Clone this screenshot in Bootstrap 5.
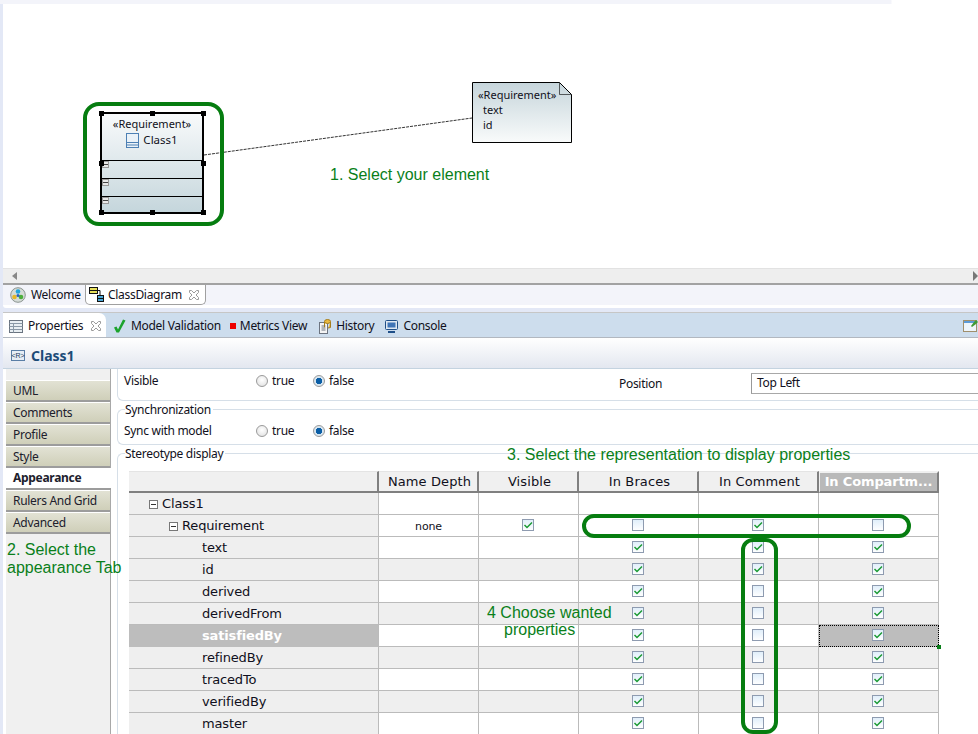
<!DOCTYPE html>
<html lang="en">
<head>
<meta charset="utf-8">
<title>Class diagram properties</title>
<link href="https://cdn.jsdelivr.net/npm/bootstrap@5.3.0/dist/css/bootstrap.min.css" rel="stylesheet">
<style>
html,body{height:734px;overflow:hidden}
body{background:#e3e8f6;font-family:"Noto Sans","Open Sans",sans-serif;font-size:12px;line-height:16px;letter-spacing:-.3px;color:#101020;position:relative;width:978px}
.topstrip{height:4px;background:linear-gradient(90deg,#f3f4fa 891px,#fff 892px)}
.workbench{margin-left:3px}
.canvasarea{height:264px;background:#fff;position:relative}
.hbar{height:17px;background:#eee;border-top:1px solid #e2e2e2;border-bottom:2px solid #a2a2a2;padding:0 0 0 9px}
.arrowl{width:0;height:0;border:4px solid transparent;border-right:5px solid #888;border-left:0}
.arrowr{width:0;height:0;border:5px solid transparent;border-left:5px solid #777;border-right:0}
.edtabs{height:20px;background:#f3f4fa;padding-left:5px}
.edtab{height:20px;gap:5px;padding:0 0 0 2px;width:77px}
.edtab.on{background:#fff;border:1px solid #a0a0a0;border-top:0;border-radius:0 0 5px 5px;width:121px;padding-left:3px;gap:4px}
.gapwhite{height:3px;background:#fff;border-radius:0 0 0 6px}
.gapblue{height:4px}
.viewtabs{height:26px;background:#cddded;border-top:1px solid #c6c6c6;border-bottom:1px solid #b2b8c0;position:relative}
.viewtab{gap:5px;height:24px;white-space:nowrap;padding-top:2px}
.viewtab.on{background:#fff;width:103px;border-radius:0 7px 0 0;padding-left:6px;margin-right:7px}
.viewtab.tight{gap:4px;margin-right:12px}
.vt-m{margin-right:9px}
.vt-h{margin-right:11px}
.xgap{margin-left:2px}
.pinbox{margin-left:auto}
.titlebar{height:31px;background:linear-gradient(#fff,#e3e7f0);border-bottom:1px solid #c4d3e0;padding:5px 0 0 8px;gap:6px;font-weight:700;font-size:14px;letter-spacing:0;color:#1c4b78}
.bodypane{height:365px;background:#fff;position:relative;overflow:hidden}
.sidetabs{width:105px;flex:none;margin-left:3px;background:#f0f0f0;border-right:1px solid #a8a8a8;padding-top:11px;margin-right:6px}
.sidetab{height:22px;padding:0 0 0 7px;line-height:20px;background:linear-gradient(#e2e2d4,#cfcfb9);border-top:1px solid #fff;border-bottom:2px solid #9c9c9c;color:#20202c}
.sidetab.on{background:#fff;font-weight:700;border-bottom:2px solid #9c9c9c;border-top:0;margin-right:-1px}
.panels{flex:1;min-width:0}
.grp{border:1px solid #d6dfe8;border-right:0;border-radius:6px 0 0 6px;position:relative}
.grp1{height:32px;border-top:0;border-radius:0 0 0 6px;margin-bottom:8px}
.grp2{height:36px;margin-bottom:8px}
.grp3{height:281px;border-bottom:0;border-radius:6px 0 0 0}
.legendtxt{position:absolute;left:7px;top:-8px;background:#fff;padding-right:2px;line-height:16px}
.proprow{height:20px;padding-left:6px}
.grp1 .proprow{padding-top:2px;height:22px}
.grp2 .proprow{position:absolute;top:11px;left:0;right:0;height:20px}
.propname{width:132px;flex:none}
.radiox{gap:4px;margin-right:17px;width:40px;flex:none}
.radiox + .radiox{width:50px}
.rad{width:12px;height:12px;border-radius:50%;border:1px solid #9a9a9a;background:radial-gradient(circle at 50% 40%,#fff,#ddd);display:inline-block;flex:none}
.rad.sel{background:radial-gradient(circle,#0a5ea6 0 3px,#d8e6f0 3.500px)}
.poslabel{margin-left:239px;width:132px;flex:none;padding-top:5px}
.posinput{flex:1;align-self:flex-start;height:21px;border:1px solid #a8a8a8;border-left:1px solid #999;border-right:0;padding-left:5px;margin-top:2px;line-height:17px}
.tablewrap{padding:17px 0 0 11px;height:280px;overflow:hidden}
.grid810{width:810px;table-layout:fixed;border-collapse:separate;border-spacing:0;font-family:"DejaVu Sans",sans-serif;font-size:13px;line-height:16px;letter-spacing:-.15px;margin:0;color:#101020}
.grid810 th{height:22px;padding:1px 0 0 3px;background:#f0f0f0;border-top:1px solid #e4e4e4;border-right:2px solid #808080;border-bottom:2px solid #808080;font-weight:400;letter-spacing:.1px;text-align:center;white-space:nowrap;overflow:hidden}
.grid810 th.hsel{padding:0;background:#b9b9b9;color:#fff;font-weight:700;letter-spacing:-.15px;border-top:2px solid #f0f0f0;border-left:1px solid #f0f0f0}
.grid810 td{height:22px;padding:0;border-right:1px solid #bbb;border-bottom:1px solid #bbb;background:#fff;text-align:center;vertical-align:middle}
.grid810 tr.alt td{background:#efefef}
.grid810 td.namecell{background:#efefef;text-align:left;border-right:1px solid #bbb;white-space:nowrap}
.grid810 td.lvl0{padding-left:20px}
.grid810 td.lvl1{padding-left:40px}
.grid810 td.lvl2{padding-left:73px}
.grid810 td.namesel{background:#bdbdbd;color:#fff;font-weight:700;border-bottom-color:#bdbdbd}
.grid810 td.cellsel{background:#bdbdbd;border:1px dotted #000;border-left:1px dotted #000;position:relative}
.grid810 td.none{font-size:11px;padding-top:2px}
.cornerdot{position:absolute;right:-3px;bottom:-3px;width:4px;height:4px;background:#0a7f1a}
.twist{display:inline-block;width:9px;height:9px;border:1px solid #777;position:relative;margin-right:4px;vertical-align:-1px;background:#fff}
.twist::after{content:"";position:absolute;left:1px;right:1px;top:3px;height:1px;background:#333}
.ckbx{display:block;width:12px;height:12px;margin:-2px 0 0 calc(50% - 7px)}
.ico{flex:none;display:block}
.umlclass{position:absolute;left:100px;top:112px;width:104px;height:102px;border:2px solid #000;background:linear-gradient(#f8fafb,#c5d6dc);text-align:center;line-height:16px;padding-top:2px;font-size:11px;letter-spacing:0}
.cls-name{gap:4px;font-size:11.500px}
.cpt{position:absolute;left:0;right:0;height:18px;border-top:1px solid #000}
.cpt-a{top:46px}
.cpt-b{top:64px}
.cpt-c{top:82px}
.cpt::before{content:"";position:absolute;left:0;top:0;width:7px;height:7px;border:1px solid #999;background:linear-gradient(#e8e8e8 2px,#444 2px,#444 3px,#e8e8e8 3px)}
.handle{position:absolute;width:5px;height:5px;background:#000}
.hx1{left:99px}.hx2{left:150px}.hx3{left:201px}
.hy1{top:111px}.hy2{top:161px}.hy3{top:210px}
.umlnote{position:absolute;left:472px;top:82px;width:86px;height:60px;padding:5px 0 0 6px;line-height:15px;font-size:11px;letter-spacing:0}
.notetxt{white-space:nowrap}
.noteattr{padding-left:5px}
.ovl{position:absolute;left:0;top:0;pointer-events:none}
.ann{position:absolute;font-family:"Liberation Sans",Arial,sans-serif;font-size:16px;line-height:18px;letter-spacing:0;color:#0a7f1a;white-space:nowrap}
.ann1{left:330px;top:166px}
.ann2{left:7px;top:541px}
.ann3{left:507px;top:446px}
.ann4{left:487px;top:604px}
.ann4b{padding-left:17px;margin-top:-1px}
.pill{position:absolute;border:4px solid #067d10;background:transparent}
.pill-sel{left:83px;top:102px;width:141px;height:124px;border-radius:16px}
.pill-row{left:582px;top:514px;width:329px;height:24px;border-radius:12px}
.pill-col{left:741px;top:538px;width:37px;height:196px;border-radius:12px}
</style>
</head>
<body>
<svg width="0" height="0" class="position-absolute">
<defs>
<linearGradient id="boxg" x1="0" y1="0" x2="0" y2="1"><stop offset="0" stop-color="#dfeefa"/><stop offset="1" stop-color="#fff"/></linearGradient>
<linearGradient id="noteg" x1="0" y1="0" x2="0" y2="1"><stop offset="0" stop-color="#c6d5db"/><stop offset="1" stop-color="#f9fbfb"/></linearGradient>
<symbol id="ckoff" viewBox="0 0 12 12"><rect x=".5" y=".5" width="11" height="11" fill="url(#boxg)" stroke="#8e9bb0"/></symbol>
<symbol id="ckon" viewBox="0 0 12 12"><rect x=".5" y=".5" width="11" height="11" fill="url(#boxg)" stroke="#8e9bb0"/><path d="M2.500 6l2.500 2.500L10 3.500" fill="none" stroke="#1b9a35" stroke-width="1.500"/></symbol>
<symbol id="xclose" viewBox="0 0 12 12"><path d="M1.500 1.500h2L6 4l2.500-2.500h2v2L8 6l2.500 2.500v2h-2L6 8l-2.500 2.500h-2v-2L4 6 1.500 3.500z" fill="#fff" stroke="#9a9a9a"/></symbol>
</defs>
</svg>

<div class="topstrip"></div>
<div class="workbench">
  <div class="canvasarea"></div>
  <div class="hbar d-flex align-items-center justify-content-between"><span class="arrowl"></span><span class="arrowr"></span></div>
  <div class="edtabs d-flex">
    <div class="edtab d-flex align-items-center">
      <svg class="ico" width="16" height="16" viewBox="0 0 16 16"><circle cx="8" cy="8" r="7.300" fill="#d5dcd8" stroke="#8c9490"/><circle cx="8" cy="4.500" r="2.300" fill="#22a5dc"/><circle cx="4.500" cy="10" r="2.300" fill="#e7b727"/><circle cx="11" cy="10" r="2.300" fill="#4cae3b"/><circle cx="8" cy="8.500" r="1.500" fill="#2a62c0"/></svg>
      <span>Welcome</span>
    </div>
    <div class="edtab on d-flex align-items-center">
      <svg class="ico" width="15" height="15" viewBox="0 0 15 15"><rect x=".5" y=".5" width="8" height="6" fill="#e7df5a" stroke="#111"/><path d="M.5 3.500h8" stroke="#111"/><rect x="8.500" y="8.500" width="6" height="6" fill="#4aa8d8" stroke="#111"/><path d="M8.500 11.500h6M8 3.500h3V8" fill="none" stroke="#111"/></svg>
      <span>ClassDiagram</span>
      <svg class="ico xgap" width="12" height="12"><use href="#xclose"/></svg>
    </div>
  </div>
  <div class="gapwhite"></div>
  <div class="gapblue"></div>
  <div class="viewtabs d-flex align-items-center">
    <div class="viewtab on d-flex align-items-center">
      <svg class="ico" width="14" height="13" viewBox="0 0 14 13"><rect x=".5" y=".5" width="13" height="12" fill="#e8eef2" stroke="#6a7480"/><path d="M.5 3.500h13M.5 6.500h13M.5 9.500h13M4.500 3.500v9" stroke="#8a98a6"/></svg>
      <span>Properties</span>
      <svg class="ico xgap" width="12" height="12"><use href="#xclose"/></svg>
    </div>
    <div class="viewtab vt-m d-flex align-items-center">
      <svg class="ico" width="13" height="14" viewBox="0 0 13 14"><path d="M1 8.500l2.500-1 1.500 3L10 .5l2.500 1L6 13.500H3.500z" fill="#1ba32c"/></svg>
      <span>Model Validation</span>
    </div>
    <div class="viewtab tight d-flex align-items-center">
      <svg class="ico" width="6" height="6" viewBox="0 0 6 6"><rect width="6" height="6" fill="#ee0000"/></svg>
      <span>Metrics View</span>
    </div>
    <div class="viewtab vt-h d-flex align-items-center">
      <svg class="ico" width="12" height="15" viewBox="0 0 12 15"><rect x=".5" y="3.500" width="8" height="11" fill="#f4f4f4" stroke="#6c7480"/><path d="M2.500 7h4M2.500 9h4M2.500 11h4" stroke="#6c7480"/><ellipse cx="8.500" cy="2.500" rx="3" ry="2" fill="#e9b93f" stroke="#a67d1c"/><path d="M5.500 3v5h.5M11.500 3v5.500l-2.500.5" fill="#e9b93f" stroke="#a67d1c"/></svg>
      <span>History</span>
    </div>
    <div class="viewtab d-flex align-items-center">
      <svg class="ico" width="13" height="13" viewBox="0 0 13 13"><rect x=".5" y=".5" width="12" height="9" rx="1" fill="#dfe8f2" stroke="#1f4f88"/><rect x="2.500" y="2.500" width="8" height="5" fill="#3f74b6"/><path d="M3 12h7" stroke="#1f4f88" stroke-width="2"/></svg>
      <span>Console</span>
    </div>
    <div class="pinbox">
      <svg class="ico" width="15" height="14" viewBox="0 0 15 14"><rect x=".5" y="2.500" width="13" height="11" fill="#eef5fb" stroke="#a08f6c"/><rect x="1" y="3" width="12" height="2" fill="#5c9bd8"/><path d="M8 8l3-4 2-2 2 2-2 2-4 3z" fill="#3f9a35"/></svg>
    </div>
  </div>
  <div class="titlebar d-flex align-items-center">
    <svg class="ico" width="14" height="11" viewBox="0 0 14 11"><rect x=".5" y=".5" width="13" height="10" fill="#e6edf5" stroke="#5a7ea6"/><text x="7" y="8" text-anchor="middle" font-family="Liberation Sans,sans-serif" font-size="7" font-weight="400" fill="#223a5a">&lt;R&gt;</text></svg>
    <span>Class1</span>
  </div>
  <div class="bodypane d-flex">
    <div class="sidetabs">
      <div class="sidetab">UML</div>
      <div class="sidetab">Comments</div>
      <div class="sidetab">Profile</div>
      <div class="sidetab">Style</div>
      <div class="sidetab on">Appearance</div>
      <div class="sidetab">Rulers And Grid</div>
      <div class="sidetab">Advanced</div>
    </div>
    <div class="panels">
      <div class="grp grp1">
        <div class="proprow d-flex align-items-center">
          <span class="propname">Visible</span>
          <span class="radiox d-flex align-items-center"><span class="rad"></span>true</span>
          <span class="radiox d-flex align-items-center"><span class="rad sel"></span>false</span>
          <span class="poslabel">Position</span>
          <div class="posinput">Top Left</div>
        </div>
      </div>
      <div class="grp grp2">
        <span class="legendtxt">Synchronization</span>
        <div class="proprow d-flex align-items-center">
          <span class="propname">Sync with model</span>
          <span class="radiox d-flex align-items-center"><span class="rad"></span>true</span>
          <span class="radiox d-flex align-items-center"><span class="rad sel"></span>false</span>
        </div>
      </div>
      <div class="grp grp3">
        <span class="legendtxt">Stereotype display</span>
        <div class="tablewrap">
          <table class="grid810">
            <colgroup><col style="width:250px"><col style="width:100px"><col style="width:100px"><col style="width:120px"><col style="width:120px"><col style="width:120px"></colgroup>
            <thead><tr><th></th><th>Name Depth</th><th>Visible</th><th>In Braces</th><th>In Comment</th><th class="hsel">In Compartm...</th></tr></thead>
            <tbody>
              <tr><td class="namecell lvl0"><span class="twist"></span>Class1</td><td></td><td></td><td></td><td></td><td></td></tr>
              <tr><td class="namecell lvl1"><span class="twist"></span>Requirement</td><td class="none">none</td><td><svg class="ckbx"><use href="#ckon"/></svg></td><td><svg class="ckbx"><use href="#ckoff"/></svg></td><td><svg class="ckbx"><use href="#ckon"/></svg></td><td><svg class="ckbx"><use href="#ckoff"/></svg></td></tr>
              <tr><td class="namecell lvl2">text</td><td></td><td></td><td><svg class="ckbx"><use href="#ckon"/></svg></td><td><svg class="ckbx"><use href="#ckon"/></svg></td><td><svg class="ckbx"><use href="#ckon"/></svg></td></tr>
              <tr class="alt"><td class="namecell lvl2">id</td><td></td><td></td><td><svg class="ckbx"><use href="#ckon"/></svg></td><td><svg class="ckbx"><use href="#ckon"/></svg></td><td><svg class="ckbx"><use href="#ckon"/></svg></td></tr>
              <tr><td class="namecell lvl2">derived</td><td></td><td></td><td><svg class="ckbx"><use href="#ckon"/></svg></td><td><svg class="ckbx"><use href="#ckoff"/></svg></td><td><svg class="ckbx"><use href="#ckon"/></svg></td></tr>
              <tr class="alt"><td class="namecell lvl2">derivedFrom</td><td></td><td></td><td><svg class="ckbx"><use href="#ckon"/></svg></td><td><svg class="ckbx"><use href="#ckoff"/></svg></td><td><svg class="ckbx"><use href="#ckon"/></svg></td></tr>
              <tr><td class="namecell namesel lvl2">satisfiedBy</td><td></td><td></td><td><svg class="ckbx"><use href="#ckon"/></svg></td><td><svg class="ckbx"><use href="#ckoff"/></svg></td><td class="cellsel"><svg class="ckbx"><use href="#ckon"/></svg><span class="cornerdot"></span></td></tr>
              <tr class="alt"><td class="namecell lvl2">refinedBy</td><td></td><td></td><td><svg class="ckbx"><use href="#ckon"/></svg></td><td><svg class="ckbx"><use href="#ckoff"/></svg></td><td><svg class="ckbx"><use href="#ckon"/></svg></td></tr>
              <tr><td class="namecell lvl2">tracedTo</td><td></td><td></td><td><svg class="ckbx"><use href="#ckon"/></svg></td><td><svg class="ckbx"><use href="#ckoff"/></svg></td><td><svg class="ckbx"><use href="#ckon"/></svg></td></tr>
              <tr class="alt"><td class="namecell lvl2">verifiedBy</td><td></td><td></td><td><svg class="ckbx"><use href="#ckon"/></svg></td><td><svg class="ckbx"><use href="#ckoff"/></svg></td><td><svg class="ckbx"><use href="#ckon"/></svg></td></tr>
              <tr><td class="namecell lvl2">master</td><td></td><td></td><td><svg class="ckbx"><use href="#ckon"/></svg></td><td><svg class="ckbx"><use href="#ckoff"/></svg></td><td><svg class="ckbx"><use href="#ckon"/></svg></td></tr>
            </tbody>
          </table>
        </div>
      </div>
    </div>
  </div>
</div>

<!-- diagram canvas: free-placed nodes -->
<div class="umlclass">
  <div>«Requirement»</div>
  <div class="cls-name d-flex justify-content-center align-items-center">
    <svg class="ico" width="13" height="15" viewBox="0 0 13 15"><rect x=".5" y=".5" width="12" height="14" fill="#eaf2f8" stroke="#4d80b4"/><path d="M.5 9.500h12M.5 12h12" stroke="#4d80b4"/></svg>
    <span>Class1</span>
  </div>
  <div class="cpt cpt-a"></div>
  <div class="cpt cpt-b"></div>
  <div class="cpt cpt-c"></div>
</div>
<div class="handle hx1 hy1"></div>
<div class="handle hx2 hy1"></div>
<div class="handle hx3 hy1"></div>
<div class="handle hx1 hy2"></div>
<div class="handle hx3 hy2"></div>
<div class="handle hx1 hy3"></div>
<div class="handle hx2 hy3"></div>
<div class="handle hx3 hy3"></div>
<svg class="ovl" width="978" height="300" viewBox="0 0 978 300">
  <path d="M204 155L472 118" stroke="#333" stroke-dasharray="3 1"/>
  <path d="M472.500 82.500H559.500L571.500 94.500V142.500H472.500Z" fill="url(#noteg)" stroke="#000"/>
  <path d="M559.500 82.500V94.500H571.500" fill="none" stroke="#000" stroke-width=".6"/>
</svg>
<div class="umlnote">
  <div class="notetxt">«Requirement»</div>
  <div class="notetxt noteattr">text</div>
  <div class="notetxt noteattr">id</div>
</div>

<!-- tutorial callouts over the screenshot -->
<div class="ann ann1">1. Select your element</div>
<div class="ann ann2">2. Select the<br>appearance Tab</div>
<div class="ann ann3">3. Select the representation to display properties</div>
<div class="ann ann4">4 Choose wanted<div class="ann4b">properties</div></div>
<div class="pill pill-sel"></div>
<div class="pill pill-row"></div>
<div class="pill pill-col"></div>

<script src="https://cdn.jsdelivr.net/npm/bootstrap@5.3.0/dist/js/bootstrap.bundle.min.js"></script>
</body>
</html>
